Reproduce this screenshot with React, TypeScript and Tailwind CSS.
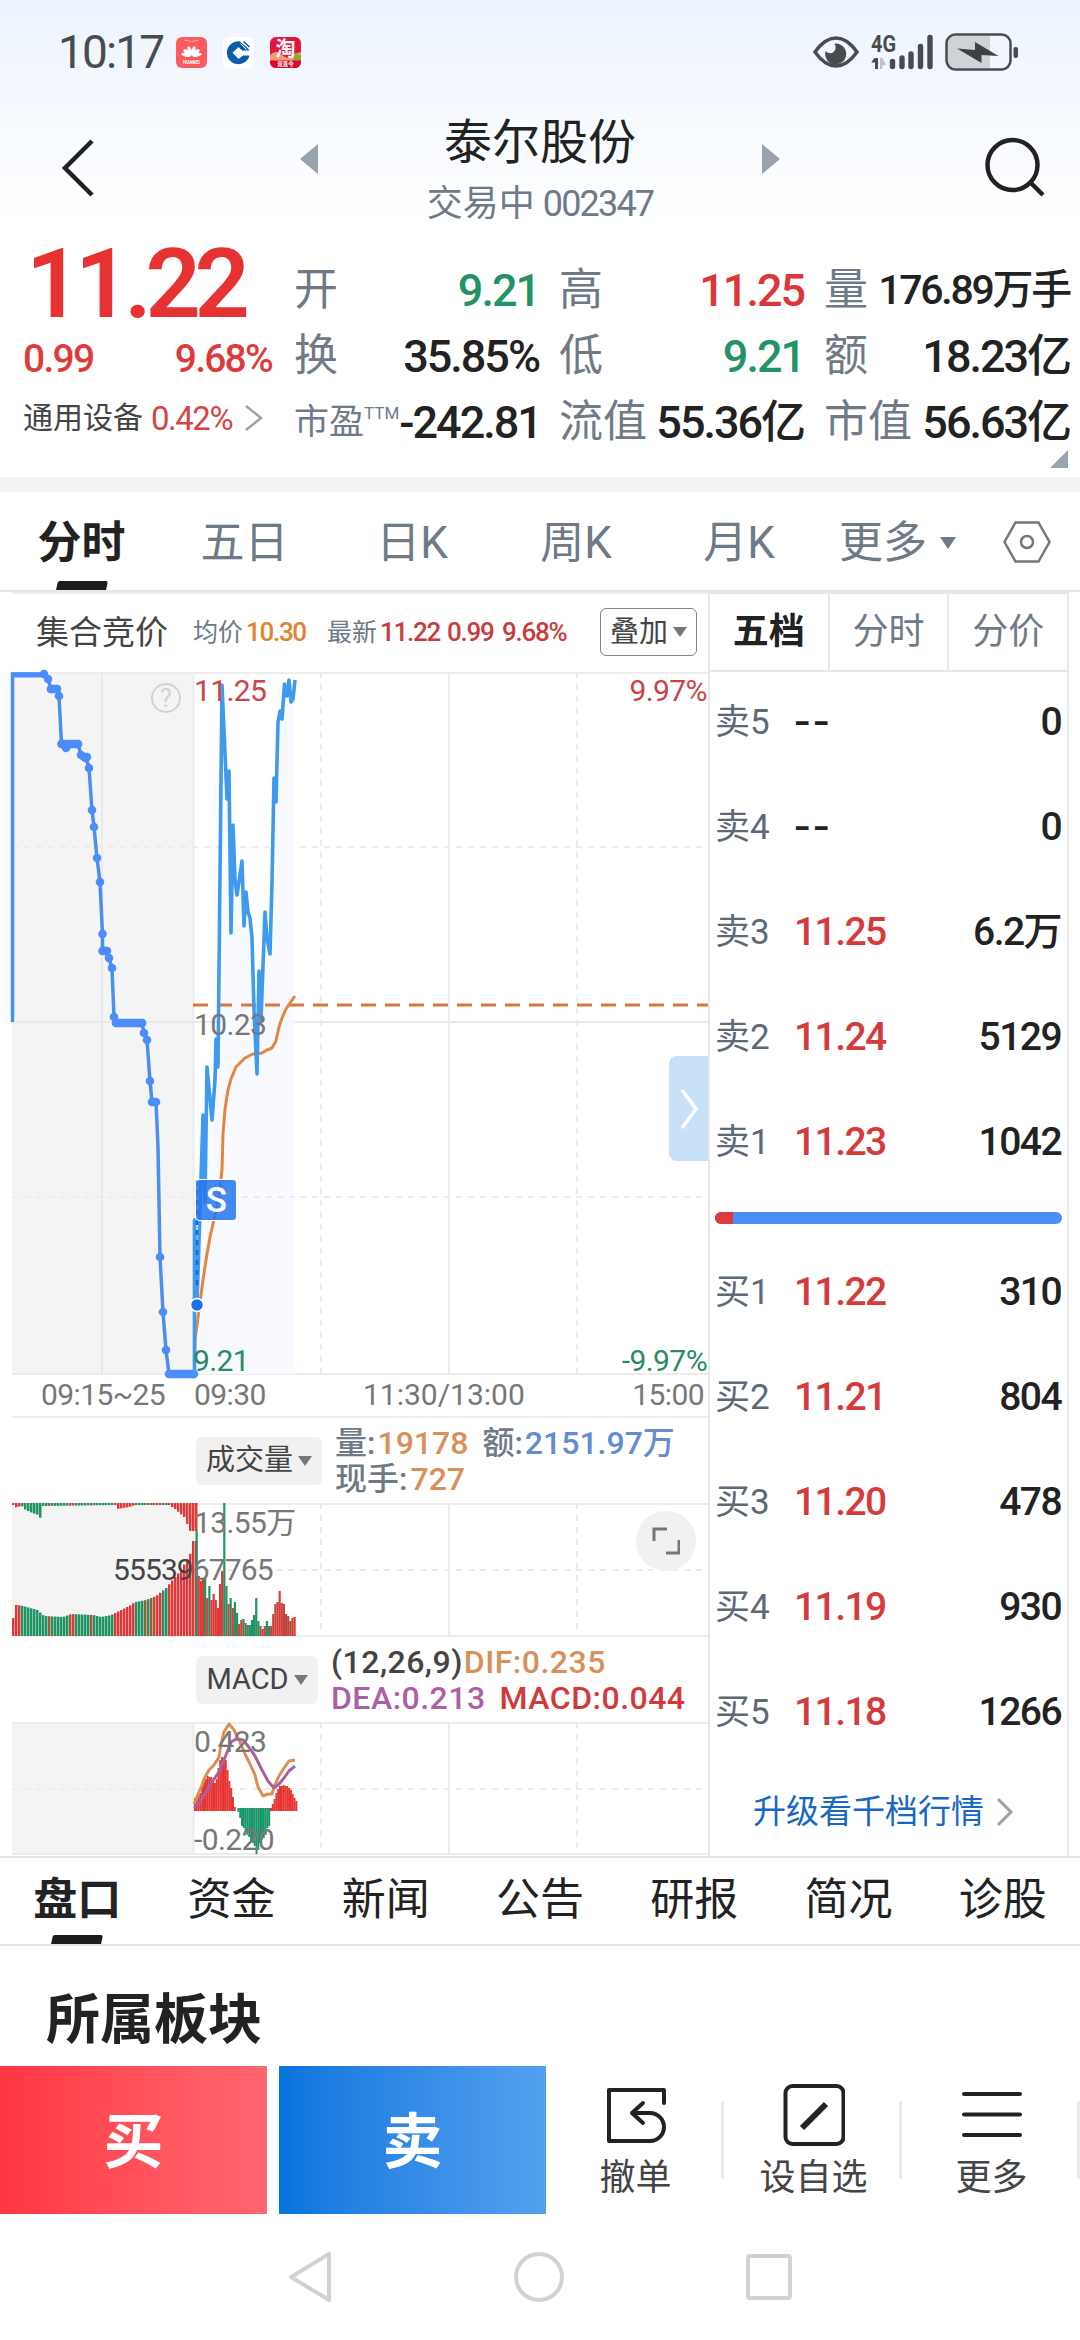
import type { ReactNode } from 'react';

/* ---------- status bar ---------- */

function HuaweiIcon() {
  return (
    <svg width="31" height="31" viewBox="0 0 31 31">
      <rect width="31" height="31" rx="6" fill="#fb5a5f" />
      <path d="M8 3q7.500 3 15 0" stroke="#ffb0b0" fill="none" strokeWidth="1" />
      <g fill="#fff">
        {[-78, -50, -18, 18, 50, 78].map((a) => (
          <ellipse key={a} cx="15.500" cy="13.500" rx="1.900" ry="4.800" transform={`rotate(${a} 15.500 19)`} />
        ))}
      </g>
      <text x="15.500" y="27" fontSize="4.500" fontWeight="700" textAnchor="middle" fill="#fff">HUAWEI</text>
    </svg>
  );
}

function BankIcon() {
  return (
    <svg width="31" height="31" viewBox="0 0 31 31">
      <rect width="31" height="31" rx="6" fill="#fff" />
      <path d="M18 4.500A11.500 11.500 0 1 0 26.500 18.500H20L15.500 22 9.500 15.800 15.500 10 19 13.500H26.500L24 10.500 17 4.500z" fill="#0a5ba8" />
      <path d="M19.500 4.500l7 7M17.500 6.500l6 6" stroke="#fff" strokeWidth="1" />
      <path d="M20.500 4.500l6 5.500" stroke="#0a5ba8" strokeWidth="1.500" />
    </svg>
  );
}

function TaobaoIcon() {
  return (
    <svg width="31" height="31" viewBox="0 0 31 31">
      <defs><clipPath id="tb"><rect width="31" height="31" rx="6" /></clipPath></defs>
      <g clipPath="url(#tb)">
        <rect width="31" height="31" fill="#e0163f" />
        <path d="M0 18q6-6 12 0t12-1l7-2v10H0z" fill="#f0a070" />
        <path d="M25 16l6 3v6h-8z" fill="#8aa83a" />
        <rect y="23.500" width="31" height="8" fill="#e3062c" />
        <text x="15.500" y="19" fontSize="20" fontWeight="700" textAnchor="middle" fill="#fff">淘</text>
        <text x="15.500" y="29" fontSize="5.500" fontWeight="700" textAnchor="middle" fill="#fff">双直今</text>
      </g>
    </svg>
  );
}

function StatusBar() {
  return (
    <div className="flex h-[104px] items-center justify-between pl-[58px] pr-[61px]">
      <div className="flex items-center">
        <span className="w-[118px] text-[46px] leading-none tracking-[-0.04em] text-[#4a4b4e]">10:17</span>
        <div className="flex gap-4">
          <HuaweiIcon />
          <BankIcon />
          <TaobaoIcon />
        </div>
      </div>
      <div className="flex items-center">
        <svg width="46" height="32" viewBox="0 0 46 32">
          <path d="M2 16C9 6 15 2 23 2s14 4 21 14C37 26 31 30 23 30S9 26 2 16z" fill="none" stroke="#4a4b4e" strokeWidth="3.500" />
          <path d="M22.500 7.500A10.500 10.500 0 1 1 12.600 15A5.500 5.500 0 1 0 21.500 8z" fill="#4a4b4e" />
        </svg>
        <svg width="64" height="52" viewBox="0 -8 64 52" className="ml-3">
          <text x="0" y="17.500" fontSize="23" fontWeight="700" fill="#4a4b4e" textLength="25" lengthAdjust="spacingAndGlyphs">4G</text>
          <path d="M0.500 28l3-4h3.500v11H4v-6.500H0.500z" fill="#4a4b4e" />
          <path d="M9 24h2.500l3.500 7h-3l-1 4H9z" fill="#bfc2c6" />
          <g stroke="#4a4b4e" strokeWidth="5.400" strokeLinecap="round">
            <path d="M21.500 27.500v5M31 24v8.500M40 20v12.500M49.500 12.500v20M59 3.500v29" />
          </g>
        </svg>
        <svg width="74" height="38" viewBox="0 0 74 38" className="ml-[10px]">
          <path d="M11 3h34v32H11q-9 0-9-9V12q0-9 9-9z" fill="#cfd2d7" />
          <rect x="1.500" y="1.500" width="64" height="35" rx="9" fill="none" stroke="#4a4b4e" strokeWidth="2.500" />
          <rect x="68.500" y="14" width="4.500" height="11" rx="2" fill="#4a4b4e" />
          <path d="M12 15.500l18 1.500V9l23.500 14-17-1v8z" fill="#3f4043" />
        </svg>
      </div>
    </div>
  );
}

/* ---------- title ---------- */

function TitleBar() {
  return (
    <div className="flex h-[128px] items-start justify-between pl-[61px] pr-[35px]">
      <svg width="34" height="60" viewBox="0 0 34 60" className="mt-[34px]">
        <path d="M31 3L4 30l27 27" fill="none" stroke="#222" strokeWidth="4.500" />
      </svg>
      <div className="ml-[2px] flex w-[480px] items-start justify-between">
        <svg width="18" height="30" viewBox="0 0 18 30" className="mt-10"><path d="M18 0v30L0 15z" fill="#99a3ae" /></svg>
        <div className="flex flex-col items-center">
          <h1 className="mt-[15px] text-[48px] leading-[48px] text-[#222]">泰尔股份</h1>
          <div className="mt-[17px] flex gap-[8px] text-[36px] leading-[40px] text-[#6f7a86]">
            <span>交易中</span>
            <span className="tracking-[-0.05em]">002347</span>
          </div>
        </div>
        <svg width="18" height="30" viewBox="0 0 18 30" className="mt-10"><path d="M0 0v30l18-15z" fill="#99a3ae" /></svg>
      </div>
      <svg width="62" height="62" viewBox="0 0 62 62" className="mt-[31px]">
        <circle cx="29.500" cy="30" r="25" fill="none" stroke="#222" strokeWidth="4.500" />
        <path d="M46 46l14 14" stroke="#222" strokeWidth="4.500" />
      </svg>
    </div>
  );
}

/* ---------- quote ---------- */

const UP = 'text-[#dd3636]';
const DOWN = 'text-[#229364]';
const INK = 'text-[#222]';

function Stat({ label, value, color, small }: { label: ReactNode; value: string; color: string; small?: boolean }) {
  return (
    <div className="flex h-[66px] items-center justify-between whitespace-nowrap leading-none">
      <span className="flex text-[44px] text-[#6f7a86]">{label}</span>
      <span className={`${small ? 'text-[41px] tracking-[-0.055em]' : 'text-[45px] tracking-[-0.045em]'} font-medium ${color}`}>{value}</span>
    </div>
  );
}

function Quote() {
  return (
    <section className="flex h-[245px] pt-[10px]">
      <div className="flex w-[294px] flex-col pl-[23px]">
        <div className="-mt-[6px] pl-[3px] text-[97px] font-semibold leading-[96px] tracking-[-0.065em] text-[#e63232]">11.22</div>
        <div className="mt-[10px] flex h-[34px] w-[249px] items-center justify-between text-[39px] font-medium leading-none tracking-[-0.045em] text-[#dd3b3b]">
          <span>0.99</span>
          <span>9.68%</span>
        </div>
        <div className="mt-[24px] flex h-[36px] items-center whitespace-nowrap leading-none">
          <span className="text-[30px] text-[#444]">通用设备</span>
          <span className="ml-[8px] text-[33px] tracking-[-0.045em] text-[#d64545]">0.42%</span>
          <svg width="20" height="28" viewBox="0 0 20 28" className="ml-[12px]"><path d="M2 2l15 12L2 26" fill="none" stroke="#9aa4ae" strokeWidth="2.500" /></svg>
        </div>
      </div>
      <div className="grid grid-cols-[245px_245px_246px] content-start gap-x-5 pt-[15px]">
        <Stat label="开" value="9.21" color={DOWN} />
        <Stat label="高" value="11.25" color={UP} />
        <Stat label="量" value="176.89万手" color={INK} small />
        <Stat label="换" value="35.85%" color={INK} />
        <Stat label="低" value="9.21" color={DOWN} />
        <Stat label="额" value="18.23亿" color={INK} />
        <Stat label={<><span className="text-[35px]">市盈</span><span className="text-[17px]">TTM</span></>} value="-242.81" color={INK} />
        <Stat label="流值" value="55.36亿" color={INK} />
        <Stat label="市值" value="56.63亿" color={INK} />
        <svg width="18" height="18" viewBox="0 0 18 18" className="col-start-3 -mt-[5px] mr-[2px] justify-self-end"><path d="M18 0v18H0z" fill="#9aa4ae" /></svg>
      </div>
    </section>
  );
}

/* ---------- period tabs ---------- */

function PeriodTabs() {
  return (
    <nav className="flex h-[100px] items-center whitespace-nowrap border-b-2 border-[#e8e8e8] pt-[3px] text-[44px] leading-none text-[#6f7a86]">
      <span className="relative flex h-full w-[163px] items-center justify-center font-bold text-[#222]">
        分时
        <span className="absolute bottom-0 left-[57px] h-[9px] w-[50px] -skew-x-12 rounded-t-[2px] bg-[#1c1c1c]" />
      </span>
      <span className="w-[163px] text-center">五日</span>
      <span className="w-[172px] text-center">日K</span>
      <span className="w-[156px] text-center">周K</span>
      <span className="w-[170px] text-center">月K</span>
      <span className="ml-[15px] flex items-center gap-[13px]">
        更多
        <svg width="16" height="12" viewBox="0 0 16 12"><path d="M0 0h16L8 12z" fill="#6f7a86" /></svg>
      </span>
      <svg width="48" height="42" viewBox="0 0 48 42" className="-mt-[2px] ml-[47px]">
        <path d="M12.500 1.500h23L46.500 21l-11 19.500h-23L1.500 21z" fill="none" stroke="#777" strokeWidth="2.500" />
        <circle cx="24" cy="21" r="6" fill="none" stroke="#777" strokeWidth="2.500" />
      </svg>
    </nav>
  );
}

/* ---------- charts ---------- */

const auction: [number, number][] = [[0.5, 350], [0.5, 2], [32, 2], [36, 7], [39, 17], [45, 17], [47, 24], [49.5, 72], [54, 76], [66, 72], [69, 83], [74, 86], [77, 96], [80, 138], [82, 155], [85, 186], [88, 210], [90.5, 262], [90.5, 279], [94, 279], [97, 286], [100, 296], [102, 345], [104, 351], [130, 351], [132, 361], [135, 368], [138, 409], [140, 430], [144, 430], [146, 475], [148, 585], [151, 640], [154, 678], [157, 702], [182, 702]];
const auctionDots: [number, number][] = auction.slice(2).filter(([x]) => x !== 146);
const price = "182.500,702 182.500,548 185,632 191,443 193,530 195,395 200,448 203,408 204,367 206,395 210,13 215,127 217,99 219,261 221,153 223,208 225,223 230,189 232,254 234,220 236,240 238,246 240,266 242,338 245,402 247,299 249,348 253,240 255,266 258,282 260,210 262,106 264,130 266,50 268,39 270,47 272.500,12 275,24 277,8 279,30 281,27 283,8";
const average = "182.500,702 183,668 187,638 191,608 194,588 198,565 203,543 207,525 210,498 211,462 213,437 216,418 219,407 224,395 228,391 233,386 241,382 250,381 255,378 260,376 264,369 267,355 270,346 274,337 278,331 283,324";

function Grid({ h, mid }: { h: number; mid: number[] }) {
  return (
    <>
      <rect width="181.500" height={h} fill="#f4f4f4" />
      <g stroke="#ececec" strokeWidth="2">
        <path d={`M0 1H696M0 ${h - 1}H696M437 0V${h}M181.500 0V${h}`} />
        <path d={`M309 0V${h}M565 0V${h}`} strokeDasharray="6 6" />
        {mid.map((y) => <path key={y} d={`M0 ${y}H696`} strokeDasharray="6 6" />)}
      </g>
    </>
  );
}

function PriceChart() {
  return (
    <div className="relative h-[703px] text-[30px] leading-none tracking-[-0.02em]">
      <svg width="696" height="703" viewBox="0 0 696 703" className="block overflow-visible">
        <Grid h={703} mid={[175, 525]} />
        <path d="M90 0V703M0 350H696" stroke="#e9e9e9" strokeWidth="2" />
        <polygon points={`182,702 ${price} 283,702`} fill="#f7faff" fillOpacity="0.9" />
        <path d="M182 525H283" stroke="#ececec" strokeWidth="2" strokeDasharray="6 6" />
        <path d="M181 333H696" stroke="#d9783a" strokeWidth="3" strokeDasharray="15 9" />
        <polyline points={auction.map((p) => p.join(',')).join(' ')} fill="none" stroke="#4a8ef2" strokeWidth="3.500" />
        <g stroke="#4a8dfb" strokeWidth="8.500" strokeLinecap="round">
          <path d="M50 72H66M105 351H130M158 702H181M39 17H45M72 85H75M92 279H95M141 430H143" />
        </g>
        <path d="M0 3H34" stroke="#4a8dfb" strokeWidth="5" />
        {auctionDots.map(([x, y], i) => <circle key={i} cx={x} cy={y} r="4.300" fill="#4a8dfb" />)}
        <polyline points={average} fill="none" stroke="#e5853f" strokeWidth="3" strokeLinejoin="round" />
        <polyline points={price} fill="none" stroke="#3f9aee" strokeWidth="3.600" strokeLinejoin="round" />
        <path d="M185 508V616" stroke="#1668e8" strokeWidth="2.500" strokeDasharray="5 5" />
        <circle cx="185" cy="633" r="6.500" fill="#1a6ff0" stroke="#fff" strokeWidth="1.500" />
        <circle cx="154" cy="26" r="14" fill="none" stroke="#d2d2d2" strokeWidth="2" />
      </svg>
      <span className="absolute left-[148px] top-[14px] text-[25px] text-[#d2d2d2]">?</span>
      <span className="absolute left-[182px] top-[4px] text-[#c94444]">11.25</span>
      <span className="absolute right-[1px] top-[4px] text-[#c94444]">9.97%</span>
      <span className="absolute left-[182px] top-[338px] text-[#777]">10.23</span>
      <span className="absolute left-[181px] top-[674px] text-[#2b8a64]">9.21</span>
      <span className="absolute right-[1px] top-[674px] text-[#2b8a64]">-9.97%</span>
      <span className="absolute left-[183px] top-[507px] flex h-[42px] w-[42px] items-center justify-center rounded-[4px] border border-white bg-[#2676f0]/85 text-[35px] font-medium text-white">S</span>
      <span className="absolute right-0 top-[384px] flex h-[105px] w-[39px] items-center justify-center rounded-l-[8px] bg-[#c9e1f7]">
        <svg width="20" height="42" viewBox="0 0 20 42"><path d="M3 2l14 19L3 40" fill="none" stroke="#fff" strokeWidth="3.500" /></svg>
      </span>
    </div>
  );
}

const R = '#de3838';
const G = '#1f9463';
const B = '#a4563a';

function lerp(points: [number, number][], x: number) {
  for (let i = 1; i < points.length; i++) {
    const [x0, y0] = points[i - 1];
    const [x1, y1] = points[i];
    if (x <= x1) return y0 + ((y1 - y0) * (x - x0)) / (x1 - x0);
  }
  return points[points.length - 1][1];
}

const lower: [number, number][] = [[0, 18], [2, 18], [3, 31], [10, 30], [24, 26], [31, 20], [50, 19], [58, 22], [80, 21], [88, 19], [98, 21], [106, 25], [116, 30], [122, 34], [133, 36], [143, 40], [153, 48], [161, 58], [168, 66], [178, 84], [180, 95], [183, 95]];
const upper: [number, number][] = [[0, 2], [4, 5], [8, 2], [11, 6], [19, 10], [25, 12], [28, 16], [29, 3], [102, 2], [104, 6], [116, 4], [122, 2], [156, 2], [162, 6], [171, 14], [177, 28], [182, 28]];
const auctionColors = 'RRRGGGGGGGGGBGGGGGGBRGGGGGBGGGGGGGRRRRRRRGGGBGBBRRGGRRRRRRRRRR';
const volumes: [number, string][] = [[105, G], [60, R], [55, R], [58, R], [58, G], [38, R], [50, G], [36, R], [42, R], [36, R], [28, R], [52, R], [65, R], [133, G], [50, G], [32, R], [38, G], [28, R], [34, G], [23, G], [12, R], [16, R], [17, G], [13, B], [11, G], [11, G], [16, G], [21, G], [38, G], [15, G], [10, B], [7, R], [10, R], [15, G], [10, G], [10, R], [22, R], [32, B], [34, R], [45, R], [33, R], [32, B], [22, R], [20, B], [15, B], [18, R], [19, R]];

function VolumeChart() {
  return (
    <div className="relative h-[134px] text-[30px] leading-none tracking-[-0.02em]">
      <svg width="696" height="134" viewBox="0 0 696 134" className="block">
        <Grid h={134} mid={[67]} />
        <rect width="181" height="134" fill="#f4f4f4" />
        {auctionColors.split('').map((c, i) => {
          const fill = c === 'R' ? R : c === 'G' ? G : B;
          const h = lerp(lower, i * 3);
          return (
            <g key={i} fill={fill}>
              <rect x={i * 3} y={133 - h} width="2.500" height={h} />
              <rect x={i * 3} y="0" width="2.500" height={lerp(upper, i * 3)} />
            </g>
          );
        })}
        {volumes.map(([h, c], i) => <rect key={i} x={183.500 + i * 2.130} y={133 - h} width="2.200" height={h} fill={c} />)}
      </svg>
      <span className="absolute left-[182px] top-[5px] text-[#777]">13.55万</span>
      <span className="absolute left-[101px] top-[52px] tracking-[-0.03em] text-[#777]"><span className="text-[#444]">55539</span>67765</span>
      <span className="absolute right-[12px] top-[8px] flex h-[60px] w-[60px] items-center justify-center rounded-full bg-[#f1f1f1]">
        <svg width="28" height="28" viewBox="0 0 28 28"><path d="M2 14V2h13M27 13v13H14" fill="none" stroke="#777" strokeWidth="3" /></svg>
      </span>
    </div>
  );
}

const macd = [13, 14, 16, 18, 24, 29, 32, 35, 34, 34, 31, 28, 32, 43, 51, 54, 52, 51, 41, 30, 23, 14, 4, 0, -4, -10, -18, -20, -24, -27, -29, -33, -35, -38, -46, -42, -35, -32, -30, -27, -20, -18, 3, 7, 12, 18, 22, 25, 25, 26, 25, 25, 23, 21, 17, 13, 10];

function MacdChart() {
  return (
    <div className="relative h-[133px] text-[30px] leading-none tracking-[-0.02em] text-[#777]">
      <svg width="696" height="133" viewBox="0 0 696 133" className="block">
        <Grid h={133} mid={[67]} />
        {macd.map((v, i) => (
          <rect key={i} x={182 + i * 1.810} y={v > 0 ? 89 - v : 86} width="1.950" height={Math.abs(v)} fill={v > 0 ? '#e63330' : '#18966a'} />
        ))}
        <polyline points="182,82 187,70 190,63 193,55 197,48 202,43 207,35 209,22 212,10 217,2 222,8 228,20 233,32 238,42 243,53 246,65 251,74 256,72 260,72 262,65 267,54 272,46 277,39 283,38" fill="none" stroke="#d99055" strokeWidth="3" strokeLinejoin="round" />
        <polyline points="182,86 188,80 194,70 200,60 207,50 214,33 219,20 224,17 231,18 236,24 243,34 250,48 256,59 262,66 267,62 272,56 277,49 283,44" fill="none" stroke="#ad5fa3" strokeWidth="3" strokeLinejoin="round" />
      </svg>
      <span className="absolute left-[182px] top-[5px]">0.423</span>
      <span className="absolute left-[182px] top-[103px]">-0.220</span>
    </div>
  );
}

function Caret() {
  return <svg width="14" height="10" viewBox="0 0 14 10"><path d="M0 0h14L7 10z" fill="#777" /></svg>;
}

function ChartHeader() {
  return (
    <div className="flex h-[80px] items-center whitespace-nowrap border-t-2 border-[#ececec] pb-[2px] pl-[24px] pr-3 text-[26px] font-medium leading-none tracking-[-0.05em]">
      <span className="w-[157px] text-[33px] font-normal tracking-normal text-[#444]">集合竞价</span>
      <span className="text-[25px] font-normal tracking-normal text-[#6f7a86]">均价</span>
      <span className="ml-[3px] w-[81px] text-[#e2832f]">10.30</span>
      <span className="text-[25px] font-normal tracking-normal text-[#6f7a86]">最新</span>
      <span className="ml-[3px] w-[67px] text-[#c83c3c]">11.22</span>
      <span className="w-[55px] text-[#c83c3c]">0.99</span>
      <span className="text-[#c83c3c]">9.68%</span>
      <span className="-mr-[1px] ml-auto flex h-[48px] w-[97px] items-center justify-center gap-[5px] rounded-[6px] border-[1.5px] border-[#7c868c] text-[29px] font-normal tracking-normal text-[#444]">叠加<Caret /></span>
    </div>
  );
}

function IndicatorRow({ name, pill, children }: { name: string; pill: string; children: ReactNode }) {
  return (
    <div className="flex h-[85px] items-center whitespace-nowrap pl-[184px] leading-none">
      <span className={`flex h-[48px] items-center justify-center gap-[5px] rounded-[6px] bg-[#f1f1f1] text-[29px] text-[#444] ${pill}`}>{name}<Caret /></span>
      <div className="ml-[13px] flex flex-col text-[32px] font-medium leading-[36px]">{children}</div>
    </div>
  );
}

function ChartPanel() {
  return (
    <div className="w-[696px]">
      <ChartHeader />
      <PriceChart />
      <div className="flex h-[43px] items-center border-b-2 border-[#ececec] pb-[2px] text-[30px] leading-none tracking-[-0.02em] text-[#777]">
        <span className="ml-[29px] w-[153px]">09:15~25</span>
        <span className="w-[169px]">09:30</span>
        <span className="tracking-normal">11:30/13:00</span>
        <span className="ml-auto pr-1">15:00</span>
      </div>
      <IndicatorRow name="成交量" pill="w-[126px]">
        <div className="text-[#6f7a86]">
          <span>量:</span><span className="ml-[2px] text-[#d6905a]">19178</span>
          <span className="ml-[14px]">额:</span><span className="ml-[2px] text-[#648dcd]">2151.97万</span>
        </div>
        <div className="text-[#6f7a86]"><span>现手:</span><span className="ml-[3px] text-[#d6905a]">727</span></div>
      </IndicatorRow>
      <VolumeChart />
      <IndicatorRow name="MACD" pill="w-[122px]">
        <div className="tracking-[0.015em]"><span className="text-[#444]">(12,26,9)</span><span className="ml-[1px] text-[#d6905a]">DIF:0.235</span></div>
        <div className="tracking-[0.015em]"><span className="text-[#ad5fa3]">DEA:0.213</span><span className="ml-[14px] text-[#d23a3a]">MACD:0.044</span></div>
      </IndicatorRow>
      <MacdChart />
    </div>
  );
}

/* ---------- order book ---------- */

type Level = [string, string, string];
const sells: Level[] = [['卖5', '--', '0'], ['卖4', '--', '0'], ['卖3', '11.25', '6.2万'], ['卖2', '11.24', '5129'], ['卖1', '11.23', '1042']];
const buys: Level[] = [['买1', '11.22', '310'], ['买2', '11.21', '804'], ['买3', '11.20', '478'], ['买4', '11.19', '930'], ['买5', '11.18', '1266']];

function LevelRow({ level: [name, p, qty] }: { level: Level }) {
  return (
    <div className="flex h-[105px] items-center pl-[5px] pr-[6px] text-[39px] leading-none tracking-[-0.04em]">
      <span className="w-[79px] text-[35px] tracking-normal text-[#5d6976]">{name}</span>
      <span className={p === '--' ? 'origin-left scale-x-125 font-medium tracking-[0.05em] text-[#222]' : 'font-medium text-[#d63b3b]'}>{p}</span>
      <span className="ml-auto font-medium text-[#222]">{qty}</span>
    </div>
  );
}

function OrderBook() {
  return (
    <div className="flex w-[361px] flex-col border-x-2 border-t-2 border-[#e8e8e8]">
      <div className="flex h-[78px] shrink-0 border-b-2 border-[#e8e8e8] text-[36px] leading-none text-[#6f7a86]">
        <span className="flex flex-1 items-center justify-center font-bold text-[#222]">五档</span>
        <span className="flex flex-1 items-center justify-center border-x-2 border-[#e8e8e8]">分时</span>
        <span className="flex flex-1 items-center justify-center">分价</span>
      </div>
      <div className="-mt-[2px]">{sells.map((l) => <LevelRow key={l[0]} level={l} />)}</div>
      <div className="mx-[5px] mt-[17px] flex h-3 shrink-0 overflow-hidden rounded-full bg-[#4a8ff5]">
        <div className="w-[18px] bg-[#e03a3a]" />
      </div>
      <div className="mt-[16px]">{buys.map((l) => <LevelRow key={l[0]} level={l} />)}</div>
      <div className="mr-[10px] mt-[30px] flex items-center justify-center gap-[12px] text-[33px] leading-none text-[#1668c4]">
        升级看千档行情
        <svg width="18" height="30" viewBox="0 0 18 30"><path d="M2 2l13 13L2 28" fill="none" stroke="#99a3ae" strokeWidth="3" /></svg>
      </div>
    </div>
  );
}

/* ---------- bottom ---------- */

const infoTabs = ['盘口', '资金', '新闻', '公告', '研报', '简况', '诊股'];

function InfoTabs() {
  return (
    <nav className="flex h-[90px] border-y-2 border-[#e4e4e4] text-[44px] leading-none text-[#222]">
      {infoTabs.map((t, i) => (
        <span key={t} className={`relative flex flex-1 items-center justify-center pb-[3px] ${i === 0 ? 'font-bold' : ''}`}>
          {t}
          {i === 0 && <span className="absolute bottom-0 left-[52px] h-[9px] w-[50px] -skew-x-12 rounded-t-[2px] bg-[#1c1c1c]" />}
        </span>
      ))}
    </nav>
  );
}

function Action({ label, children }: { label: string; children: ReactNode }) {
  return (
    <div className="flex flex-1 items-center">
      <div className="flex flex-1 flex-col items-center pl-[4px]">
        <svg width="62" height="62" viewBox="0 0 62 62" fill="none" stroke="#222" strokeWidth="4">{children}</svg>
        <span className="mt-[14px] text-[36px] leading-none text-[#444]">{label}</span>
      </div>
      <span className="h-[78px] w-[3px] bg-[#ebebed]" />
    </div>
  );
}

function ActionBar() {
  return (
    <div className="flex h-[148px] text-[60px] font-bold leading-none text-white">
      <button className="flex w-[267px] items-center justify-center bg-linear-to-r from-[#ff3543] to-[#ff6670] pt-[6px]">买</button>
      <button className="ml-3 flex w-[267px] items-center justify-center bg-linear-to-r from-[#0774dd] to-[#52a1ef] pt-[6px]">卖</button>
      <div className="flex flex-1 font-normal">
        <Action label="撤单">
          <path d="M59 19V6H4v51h41a13.500 13.500 0 0 0 0-28H27M38 19L27 29l11 10" strokeLinejoin="round" strokeLinecap="round" />
        </Action>
        <Action label="设自选">
          <rect x="2.500" y="2" width="58" height="58" rx="7" />
          <path d="M19 44l24-24" strokeWidth="6" />
        </Action>
        <Action label="更多">
          <path d="M3 10H59M3 30.500H59M3 51H59" strokeLinecap="round" />
        </Action>
      </div>
    </div>
  );
}

function SystemNav() {
  return (
    <div className="flex h-[126px] items-center justify-center gap-[182px] pl-[2px]">
      <svg width="44" height="52" viewBox="0 0 44 52" className="-ml-[3px]"><path d="M41 3v46L3 26z" fill="none" stroke="#d2d2d2" strokeWidth="4" strokeLinejoin="round" /></svg>
      <span className="h-[50px] w-[50px] rounded-full border-4 border-[#d2d2d2]" />
      <span className="h-[46px] w-[46px] rounded-[4px] border-4 border-[#d2d2d2]" />
    </div>
  );
}

export default function App() {
  return (
    <main className="h-[2340px] w-[1080px] overflow-hidden bg-white font-['Roboto','Noto_Sans_CJK_SC',sans-serif]">
      <header className="bg-linear-to-b from-[#edf4fe] to-white">
        <StatusBar />
        <TitleBar />
      </header>
      <Quote />
      <div className="h-[15px] bg-[#f3f3f3]" />
      <PeriodTabs />
      <div className="flex h-[1264px] pl-3">
        <ChartPanel />
        <OrderBook />
      </div>
      <InfoTabs />
      <h2 className="flex h-[120px] items-center pl-[46px] pt-[30px] text-[54px] font-bold leading-none text-[#222]">所属板块</h2>
      <ActionBar />
      <SystemNav />
    </main>
  );
}
